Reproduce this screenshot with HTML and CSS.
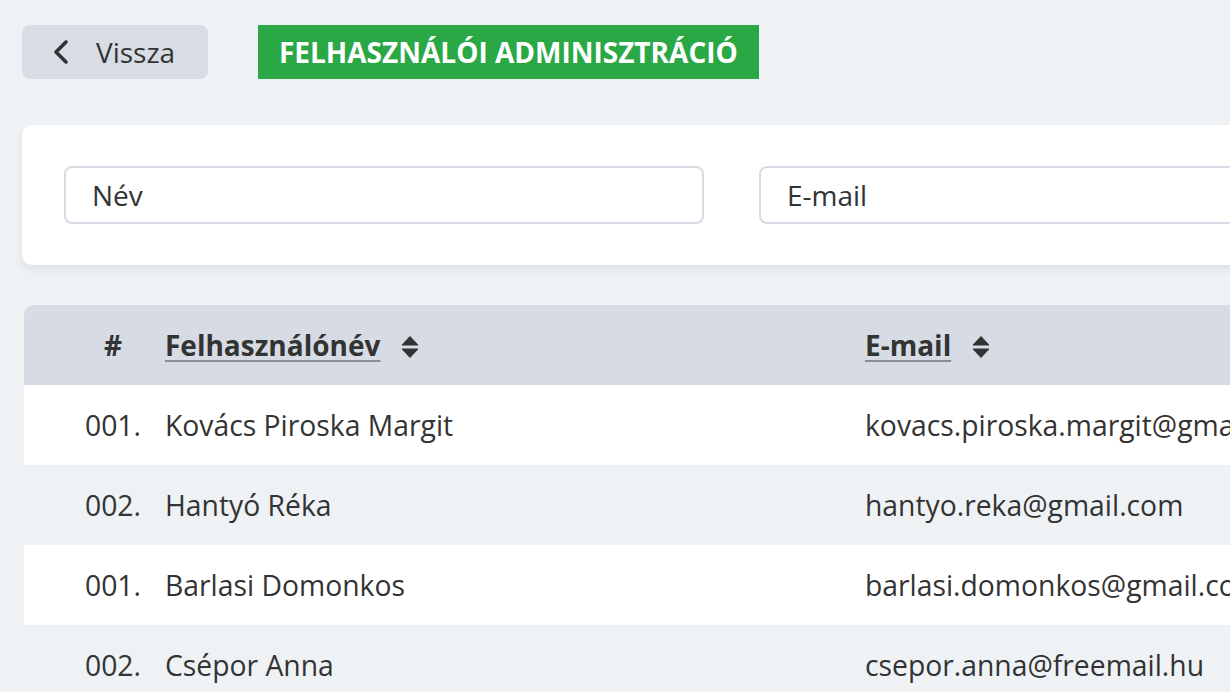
FILE: index.html
```html
<!DOCTYPE html>
<html lang="hu">
<head>
    <meta charset="UTF-8">
    <meta name="viewport" content="width=device-width, initial-scale=1.0">
    <title>Felhasználói adminisztráció</title>
    <link rel="stylesheet" href="styles.css">
</head>
<body>
    <div class="page">
        <div class="topbar">
            <button class="back-btn">
                <svg width="18" height="26" viewBox="0 0 18 26"><path d="M14 3 L4 13 L14 23" fill="none" stroke="#333" stroke-width="3.6" stroke-linecap="round" stroke-linejoin="round"/></svg>
                <span>Vissza</span>
            </button>
            <div class="page-title">FELHASZNÁLÓI ADMINISZTRÁCIÓ</div>
        </div>

        <!-- Filters -->
        <div class="filter-card">
            <input class="filter-input" type="text" placeholder="Név">
            <input class="filter-input" type="text" placeholder="E-mail">
        </div>

        <!-- Users table -->
        <table class="users">
            <thead>
                <tr>
                    <th class="col-num">#</th>
                    <th class="col-name"><span class="sort-link">Felhasználónév</span><svg class="sort-icon" width="18" height="24" viewBox="0 0 18 24"><path d="M9 1.5 L17 10 L1 10 Z M9 22.5 L17 14 L1 14 Z" fill="#333" stroke="#333" stroke-width="1" stroke-linejoin="round"/></svg></th>
                    <th class="col-email"><span class="sort-link">E-mail</span><svg class="sort-icon" width="18" height="24" viewBox="0 0 18 24"><path d="M9 1.5 L17 10 L1 10 Z M9 22.5 L17 14 L1 14 Z" fill="#333" stroke="#333" stroke-width="1" stroke-linejoin="round"/></svg></th>
                </tr>
            </thead>
            <tbody>
                <tr><td class="col-num">001.</td><td>Kovács Piroska Margit</td><td>kovacs.piroska.margit@gmail.com</td></tr>
                <tr><td class="col-num">002.</td><td>Hantyó Réka</td><td>hantyo.reka@gmail.com</td></tr>
                <tr><td class="col-num">001.</td><td>Barlasi Domonkos</td><td>barlasi.domonkos@gmail.com</td></tr>
                <tr><td class="col-num">002.</td><td>Csépor Anna</td><td>csepor.anna@freemail.hu</td></tr>
            </tbody>
        </table>
    </div>
</body>
</html>
```

FILE: styles.css
```css
html, body {
    margin: 0;
    padding: 0;
    overflow: hidden;
}
body {
    font-family: "Open Sans", "Noto Sans", sans-serif;
    background-color: #eff2f5;
    color: #333;
}
.page {
    width: 1700px;
    padding: 25px 0 0 22px;
}
.topbar {
    display: flex;
    align-items: center;
    gap: 50px;
}
.back-btn {
    display: flex;
    align-items: center;
    gap: 26px;
    height: 54px;
    width: 186px;
    padding: 0 0 0 30px;
    border: none;
    border-radius: 8px;
    background-color: #d8dde5;
    font-family: inherit;
    font-size: 28px;
    color: #333;
    cursor: pointer;
}
.page-title {
    height: 54px;
    line-height: 54px;
    padding: 0 21px;
    background-color: #2aa845;
    color: #fff;
    font-size: 28px;
    font-weight: 700;
}
.filter-card {
    display: flex;
    gap: 55px;
    margin-top: 46px;
    padding: 41px 42px;
    background-color: #fff;
    border-radius: 10px;
    box-shadow: 0 4px 10px rgba(0,0,0,0.08);
}
.filter-input {
    width: 640px;
    height: 58px;
    box-sizing: border-box;
    padding: 0 26px;
    border: 2px solid #d7dce4;
    border-radius: 8px;
    font-family: inherit;
    font-size: 28px;
    color: #333;
}
.filter-input::placeholder { color: #333; }
.users {
    margin: 40px 0 0 2px;
    border-collapse: collapse;
    table-layout: fixed;
    width: 1500px;
}
.users th, .users td {
    height: 80px;
    padding: 0;
    text-align: left;
    white-space: nowrap;
}
.users thead tr { background-color: #d7dce4; }
.users thead th:first-child { border-top-left-radius: 10px; }
.users th {
    font-size: 28px;
    font-weight: 700;
}
.users td { font-size: 28.3px; }
.users tbody tr:nth-child(odd) { background-color: #fff; }
.users tbody tr:nth-child(even) { background-color: #eff2f5; }
.users .col-num {
    width: 104px;
    padding-left: 37px;
    text-align: center;
}
.users .col-name { width: 700px; }
.sort-link {
    text-decoration: underline;
    text-underline-offset: 4px;
    text-decoration-thickness: 2px;
    text-decoration-color: #8a8d92;
}
.sort-icon {
    vertical-align: middle;
    margin-left: 21px;
    margin-top: -4px;
}
```
